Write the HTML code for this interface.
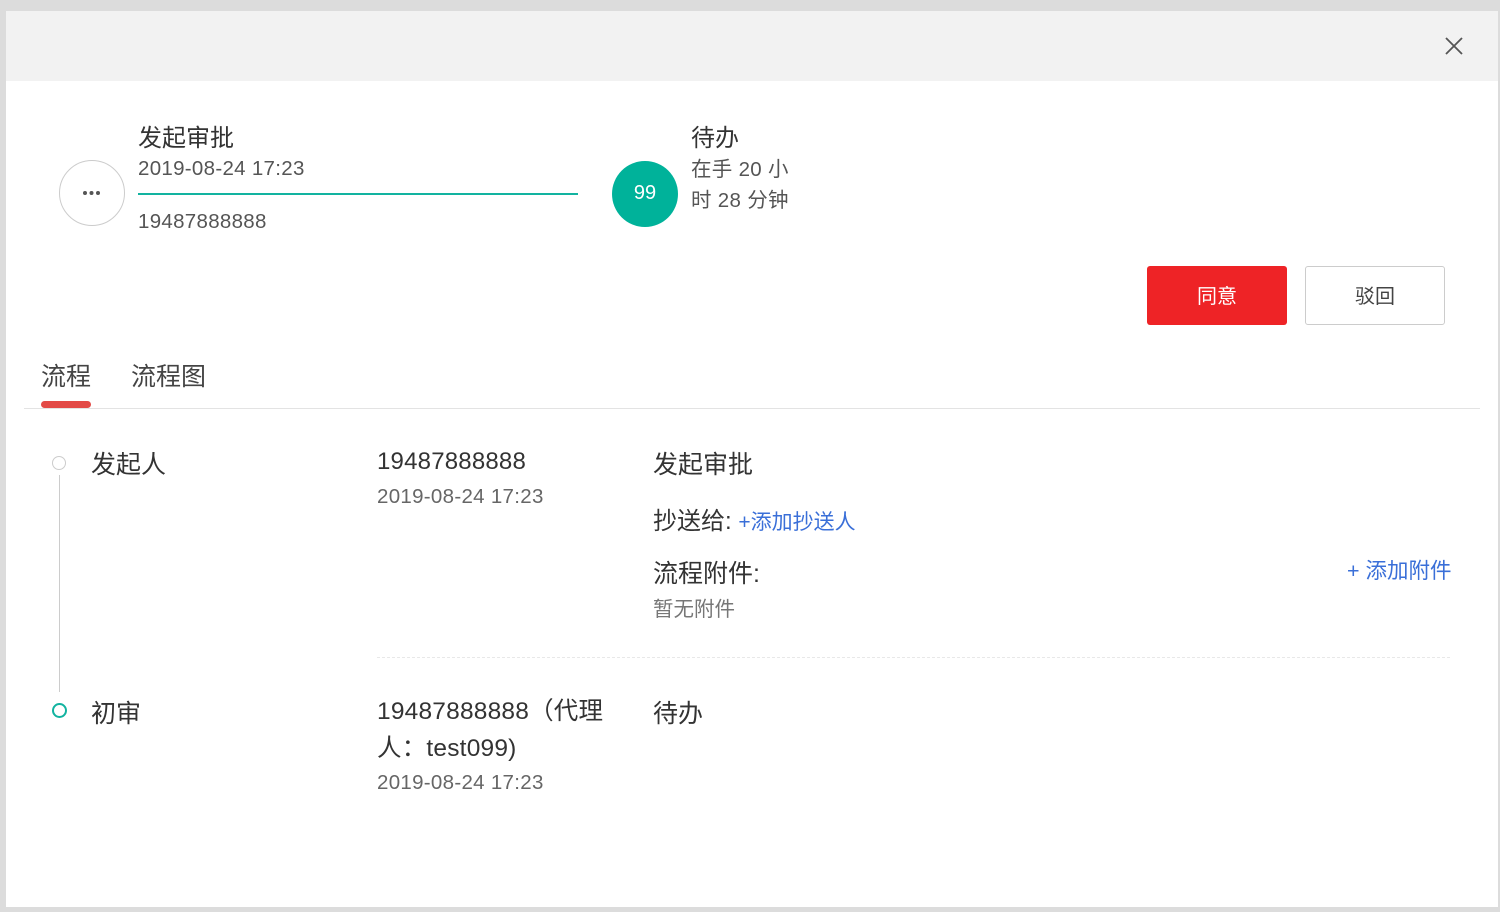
<!DOCTYPE html>
<html><head><meta charset="utf-8"><style>
body{margin:0;width:1500px;height:912px;background:#dcdcdc;font-family:"Liberation Sans","Noto Sans CJK SC",sans-serif;color:#333;position:relative;overflow:hidden}
.m{position:absolute;left:6px;top:11px;width:1492px;height:896px;background:#fff}
.h{position:absolute;left:6px;top:11px;width:1492px;height:70px;background:#f2f2f2}
.a{position:absolute;white-space:nowrap}
</style></head><body>
<div class="m"></div><div class="h"></div>
<svg class="a" style="left:1444px;top:36px" width="20" height="20"><path d="M2 2L18 18M18 2L2 18" stroke="#555" stroke-width="1.8"/></svg>

<div class="a" style="left:59px;top:160px;width:64px;height:64px;border:1.5px solid #ccc;border-radius:50%"></div>
<svg class="a" style="left:82px;top:190px" width="20" height="6"><circle cx="3" cy="3" r="2" fill="#555"/><circle cx="9.5" cy="3" r="2" fill="#555"/><circle cx="16" cy="3" r="2" fill="#555"/></svg>
<div class="a" style="left:138px;top:118px;font-size:24px;color:#333">发起审批</div>
<div class="a" style="left:138px;top:157px;font-size:20.5px;color:#555;letter-spacing:0.3px">2019-08-24 17:23</div>
<div class="a" style="left:138px;top:193px;width:440px;height:2px;background:#12b3a0"></div>
<div class="a" style="left:138px;top:210px;font-size:20.5px;color:#555;letter-spacing:0.3px">19487888888</div>

<div class="a" style="left:612px;top:161px;width:66px;height:66px;border-radius:50%;background:#00b29a;color:#fff;font-size:20px;text-align:center;line-height:64px">99</div>
<div class="a" style="left:691px;top:118px;font-size:24px;color:#333">待办</div>
<div class="a" style="left:691px;top:154px;font-size:20.5px;color:#555;line-height:31px;letter-spacing:0.3px">在手 20 小<br>时 28 分钟</div>

<div class="a" style="left:1147px;top:266px;width:140px;height:59px;background:#ee2326;border-radius:3px;color:#fff;font-size:20px;text-align:center;line-height:62px">同意</div>
<div class="a" style="left:1305px;top:266px;width:138px;height:57px;border:1.5px solid #ccc;border-radius:3px;color:#444;font-size:20px;text-align:center;line-height:60px">驳回</div>

<div class="a" style="left:41px;top:357px;font-size:25px;color:#444">流程</div>
<div class="a" style="left:131px;top:357px;font-size:25px;color:#444">流程图</div>
<div class="a" style="left:41px;top:401px;width:50px;height:7px;border-radius:4px;background:#e34a46"></div>
<div class="a" style="left:24px;top:408px;width:1456px;height:1px;background:#e3e3e3"></div>

<div class="a" style="left:52px;top:456px;width:14px;height:14px;border:1.5px solid #ccc;border-radius:50%;box-sizing:border-box"></div>
<div class="a" style="left:59px;top:475px;width:1px;height:217px;background:#ccc"></div>
<div class="a" style="left:52px;top:703px;width:15px;height:15px;border:2px solid #12b3a0;border-radius:50%;box-sizing:border-box"></div>

<div class="a" style="left:91px;top:445px;font-size:25px;color:#333">发起人</div>
<div class="a" style="left:377px;top:448px;font-size:24px;color:#333;letter-spacing:0.2px">19487888888</div>
<div class="a" style="left:377px;top:485px;font-size:20.5px;color:#666;letter-spacing:0.3px">2019-08-24 17:23</div>
<div class="a" style="left:653px;top:445px;font-size:25px;color:#333">发起审批</div>
<div class="a" style="left:653px;top:501px;font-size:24px;color:#333">抄送给: <span style="color:#3a6fd8;font-size:21px">+添加抄送人</span></div>
<div class="a" style="left:653px;top:554px;font-size:25px;color:#333">流程附件:</div>
<div class="a" style="left:653px;top:592px;font-size:20.5px;color:#777">暂无附件</div>
<div class="a" style="left:1347px;top:554px;font-size:21.5px;color:#3a6fd8">+ 添加附件</div>
<div class="a" style="left:377px;top:657px;width:1073px;border-top:1.5px dashed #e8e8e8"></div>

<div class="a" style="left:91px;top:694px;font-size:25px;color:#333">初审</div>
<div class="a" style="left:377px;top:693px;font-size:24.5px;color:#333;line-height:37px;letter-spacing:0.2px">19487888888（代理<br>人：test099)</div>
<div class="a" style="left:377px;top:771px;font-size:20.5px;color:#666;letter-spacing:0.3px">2019-08-24 17:23</div>
<div class="a" style="left:653px;top:694px;font-size:25px;color:#333">待办</div>
</body></html>
